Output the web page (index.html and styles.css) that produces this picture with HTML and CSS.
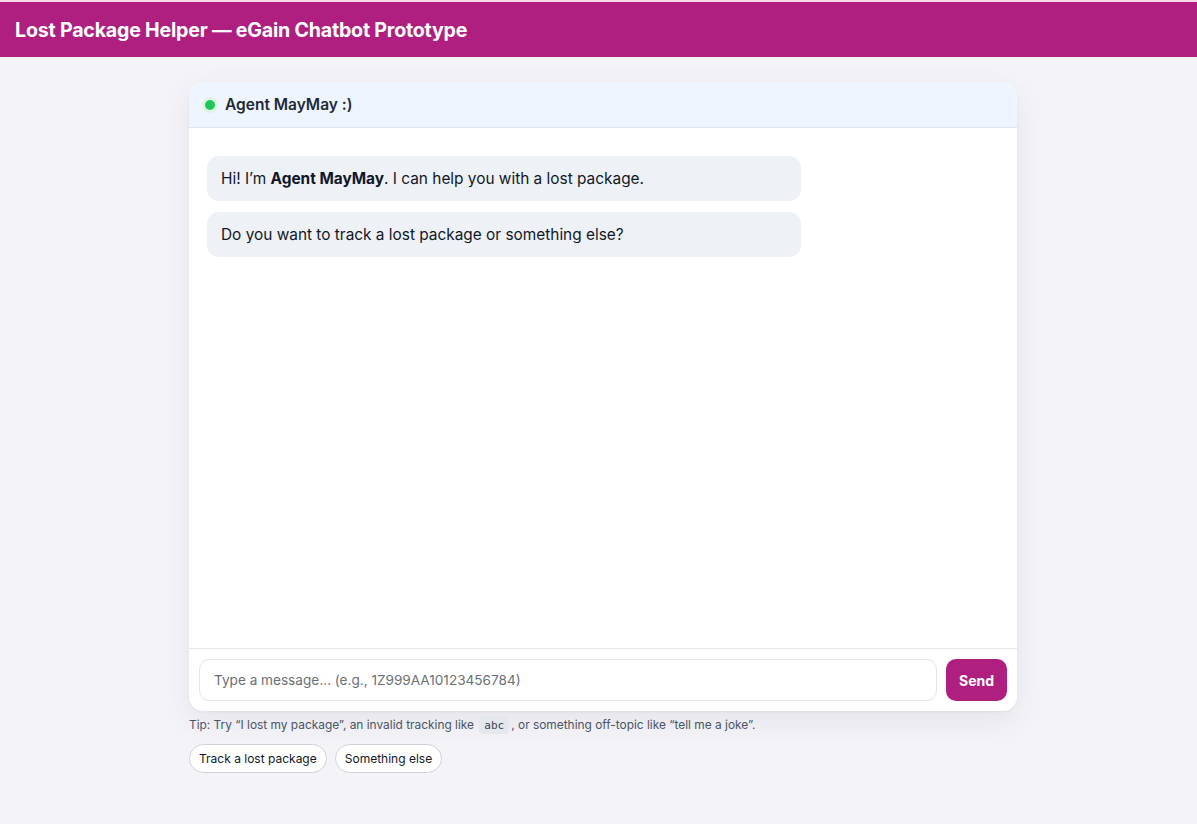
FILE: index.html
```html
<!DOCTYPE html>
<html lang="en">
<head>
<meta charset="utf-8">
<title>Lost Package Helper — eGain Chatbot Prototype</title>
<link rel="stylesheet" href="styles.css">
</head>
<body>
<header class="topbar">
  <h1 class="title">Lost Package Helper — eGain Chatbot Prototype</h1>
</header>
<main class="wrap">
  <section class="chat">
    <div class="chat-head">
      <span class="dot"></span>
      <span class="agent">Agent MayMay :)</span>
    </div>
    <div class="messages">
      <div class="bubble">Hi! I’m <b>Agent MayMay</b>. I can help you with a lost package.</div>
      <div class="bubble">Do you want to track a lost package or something else?</div>
    </div>
    <form class="composer">
      <input class="input" type="text" placeholder="Type a message… (e.g., 1Z999AA10123456784)">
      <button class="send" type="button">Send</button>
    </form>
  </section>
  <p class="tip">Tip: Try “I lost my package”, an invalid tracking like <code class="code">abc</code>, or something off-topic like “tell me a joke”.</p>
  <div class="chips">
    <button class="chip" type="button">Track a lost package</button>
    <button class="chip" type="button">Something else</button>
  </div>
</main>
</body>
</html>
```
FILE: styles.css
```css
* { box-sizing: border-box; }
html, body { margin: 0; padding: 0; }
body {
  background: #f4f4f8;
  font-family: Inter, "Noto Sans", "Liberation Sans", sans-serif;
  color: #111827;
  min-height: 824px;
}
.topbar {
  background: #ae1f7f;
  border-top: 2px solid #f3d9e7;
  height: 57px;
  display: flex;
  align-items: center;
  padding: 0 15px;
}
.title {
  margin: 0;
  color: #fff;
  font-size: 19.6px;
  font-weight: 700;
  letter-spacing: -0.2px;
}
.wrap {
  width: 837px;
  padding-left: 9px;
  margin: 25px auto 0;
}
.chat {
  background: #fff;
  border-radius: 14px;
  box-shadow: 0 10px 30px rgba(30, 30, 70, 0.08), 0 1px 3px rgba(0,0,0,0.04);
  overflow: hidden;
  display: flex;
  flex-direction: column;
  height: 629px;
}
.chat-head {
  background: #eff5fe;
  border-bottom: 1px solid #dde5f1;
  height: 46px;
  display: flex;
  align-items: center;
  gap: 10px;
  padding: 0 16px;
}
.dot {
  width: 10px;
  height: 10px;
  border-radius: 50%;
  background: #22c55e;
  box-shadow: 0 0 0 3px #dcf5e5;
}
.agent {
  font-size: 15.5px;
  font-weight: 600;
  color: #1f2937;
}
.messages {
  flex: 1;
  padding: 28px 18px;
  display: flex;
  flex-direction: column;
  gap: 11px;
}
.bubble {
  width: 594px;
  background: #eef1f6;
  border-radius: 12px;
  padding: 12px 14px;
  font-size: 15.4px;
  line-height: 21px;
  color: #111827;
}
.bubble b { font-weight: 700; }
.composer {
  margin: 0;
  border-top: 1px solid #e5e7eb;
  padding: 10px 10px;
  display: flex;
  gap: 9px;
}
.input {
  flex: 1;
  height: 42px;
  border: 1px solid #e2e4e8;
  border-radius: 10px;
  padding: 0 14px;
  font-family: inherit;
  font-size: 13.6px;
  color: #111827;
  outline: none;
}
.input::placeholder { color: #6b6f76; }
.send {
  width: 61px;
  height: 42px;
  border: 0;
  border-radius: 10px;
  background: #ae1f7f;
  color: #fff;
  font-family: inherit;
  font-size: 14px;
  font-weight: 700;
  cursor: pointer;
}
.tip {
  margin: 5px 0 0;
  font-size: 11.9px;
  line-height: 18px;
  color: #4b5567;
}
.code {
  font-family: "DejaVu Sans Mono", "Liberation Mono", monospace;
  font-size: 11px;
  background: #e4e7ec;
  border-radius: 4px;
  padding: 2px 5px;
  margin: 0 2px;
  color: #374151;
}
.chips {
  margin-top: 9px;
  display: flex;
  gap: 8px;
}
.chip {
  height: 29px;
  padding: 0 9px;
  border: 1px solid #cfd2d8;
  border-radius: 999px;
  background: #fff;
  font-family: inherit;
  font-size: 12px;
  color: #111827;
  cursor: pointer;
}
```
